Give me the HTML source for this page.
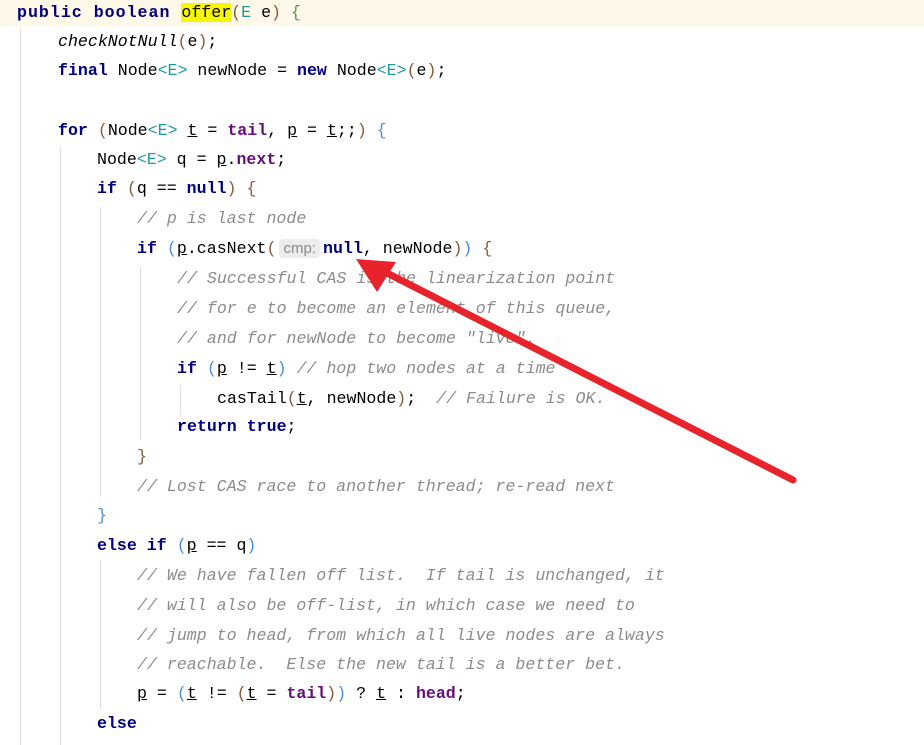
<!DOCTYPE html>
<html><head><meta charset="utf-8"><style>
body{margin:0;width:924px;height:745px;background:#fff;position:relative;overflow:hidden;font-family:"Liberation Mono",monospace;font-size:16.6px;color:#000}
.l{position:absolute;height:30px;line-height:30px;white-space:pre}
.k{color:#000080;font-weight:bold}
.f{color:#660e7a;font-weight:bold}
.c{color:#8c8c8c;font-style:italic}
.t{color:#20999d}
.pb{color:#4a8fd6}
.pr{color:#8a5a3c}
.u{text-decoration:underline}
.g{position:absolute;width:1px;background:#e0e0e0}
.hint{background:#ececec;color:#8a8a8a;font-family:"Liberation Sans",sans-serif;font-size:15px;border-radius:4px;padding:1px 4px;margin:0 3px}
</style></head><body>
<div style="position:absolute;left:0;top:0;width:924px;height:26px;background:#fdf8e8"></div>
<div class="g" style="left:20px;top:27px;height:718px"></div>
<div class="g" style="left:60px;top:147px;height:598px"></div>
<div class="g" style="left:100px;top:207px;height:290px"></div>
<div class="g" style="left:100px;top:560px;height:150px"></div>
<div class="g" style="left:140px;top:266px;height:174px"></div>
<div class="g" style="left:180px;top:385px;height:30px"></div>

<div class="l" style="left:17px;top:-2px"><span class="k" style="letter-spacing:1px">public boolean </span><span style="background:#f7f700">offer</span><span class="pr">(</span><span class="t">E</span> e<span class="pr">)</span> <span style="color:#4a9a4a">{</span></div>
<div class="l" style="left:58px;top:27px"><i>checkNotNull</i><span class="pr">(</span>e<span class="pr">)</span>;</div>
<div class="l" style="left:58px;top:56px"><span class="k">final</span> Node<span class="t">&lt;E&gt;</span> newNode = <span class="k">new</span> Node<span class="t">&lt;E&gt;</span><span class="pr">(</span>e<span class="pr">)</span>;</div>
<div class="l" style="left:58px;top:116px"><span class="k">for</span> <span class="pr">(</span>Node<span class="t">&lt;E&gt;</span> <span class="u">t</span> = <span class="f">tail</span>, <span class="u">p</span> = <span class="u">t</span>;;<span class="pr">)</span> <span class="pb">{</span></div>
<div class="l" style="left:97px;top:145px">Node<span class="t">&lt;E&gt;</span> q = <span class="u">p</span>.<span class="f">next</span>;</div>
<div class="l" style="left:97px;top:174px"><span class="k">if</span> <span class="pr">(</span>q == <span class="k">null</span><span class="pr">)</span> <span class="pr">{</span></div>
<div class="l c" style="left:137px;top:204px">// p is last node</div>
<div class="l" style="left:137px;top:234px"><span class="k">if</span> <span class="pb">(</span><span class="u">p</span>.casNext<span class="pr">(</span><span class="hint">cmp:</span><span class="k">null</span>, newNode<span class="pr">)</span><span class="pb">)</span> <span class="pr">{</span></div>
<div class="l c" style="left:177px;top:264px">// Successful CAS is the linearization point</div>
<div class="l c" style="left:177px;top:294px">// for e to become an element of this queue,</div>
<div class="l c" style="left:177px;top:324px">// and for newNode to become "live".</div>
<div class="l" style="left:177px;top:354px"><span class="k">if</span> <span class="pb">(</span><span class="u">p</span> != <span class="u">t</span><span class="pb">)</span> <span class="c">// hop two nodes at a time</span></div>
<div class="l" style="left:217px;top:384px">casTail<span class="pr">(</span><span class="u">t</span>, newNode<span class="pr">)</span>;  <span class="c">// Failure is OK.</span></div>
<div class="l" style="left:177px;top:412px"><span class="k">return true</span>;</div>
<div class="l pr" style="left:137px;top:442px">}</div>
<div class="l c" style="left:137px;top:472px">// Lost CAS race to another thread; re-read next</div>
<div class="l" style="left:97px;top:501px;color:#4a8fd6">}</div>
<div class="l" style="left:97px;top:531px"><span class="k">else if</span> <span class="pb">(</span><span class="u">p</span> == q<span class="pb">)</span></div>
<div class="l c" style="left:137px;top:561px">// We have fallen off list.  If tail is unchanged, it</div>
<div class="l c" style="left:137px;top:591px">// will also be off-list, in which case we need to</div>
<div class="l c" style="left:137px;top:621px">// jump to head, from which all live nodes are always</div>
<div class="l c" style="left:137px;top:650px">// reachable.  Else the new tail is a better bet.</div>
<div class="l" style="left:137px;top:679px"><span class="u">p</span> = <span class="pb">(</span><span class="u">t</span> != <span class="pr">(</span><span class="u">t</span> = <span class="f">tail</span><span class="pr">)</span><span class="pb">)</span> ? <span class="u">t</span> : <span class="f">head</span>;</div>
<div class="l" style="left:97px;top:709px"><span class="k">else</span></div>

<svg style="position:absolute;left:0;top:0" width="924" height="745">
<line x1="793" y1="480" x2="385" y2="272" stroke="#e8232b" stroke-width="7" stroke-linecap="round"/>
<polygon points="356,259 396,262 377,292" fill="#e8232b"/>
</svg>
</body></html>
